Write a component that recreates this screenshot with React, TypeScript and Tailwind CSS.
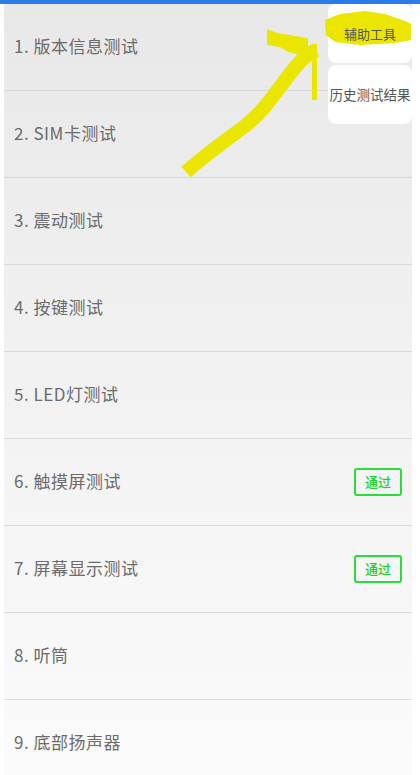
import React from 'react';

interface TestItem {
  label: string;
  passed?: boolean;
}

const items: TestItem[] = [
  { label: '1. 版本信息测试' },
  { label: '2. SIM卡测试' },
  { label: '3. 震动测试' },
  { label: '4. 按键测试' },
  { label: '5. LED灯测试' },
  { label: '6. 触摸屏测试', passed: true },
  { label: '7. 屏幕显示测试', passed: true },
  { label: '8. 听筒' },
  { label: '9. 底部扬声器' },
];

const font = { fontFamily: '"Noto Sans CJK SC", "Noto Sans", sans-serif' };

const App: React.FC = () => {
  return (
    <div className="relative w-[420px] h-[775px] overflow-hidden bg-white" style={font}>
      {/* top accent bar */}
      <div className="h-[4px] bg-[#2b7be9]" />

      {/* test list */}
      <div className="ml-[4px] w-[408px] h-[771px] bg-gradient-to-b from-[#e8e8e8] via-[#f2f2f2] to-[#fbfbfb]">
        {items.map((item, i) => (
          <div
            key={i}
            className="h-[87px] flex items-center justify-between pl-[10px] pr-[10px] border-b border-[#d9d9d9]"
          >
            <span className="text-[17px] text-[#6b6b6b] tracking-[0.5px] -mt-[2px]">{item.label}</span>
            {item.passed && (
              <span className="w-[48px] h-[28px] flex items-center justify-center border-[2.5px] border-[#2bdc3a] rounded-[3px] text-[13px] font-medium text-[#1fcf2e]">
                通过
              </span>
            )}
          </div>
        ))}
      </div>

      {/* popup menu */}
      <div className="absolute left-[328px] top-[4px] w-[84px] flex flex-col gap-[2px]">
        <div className="h-[59px] bg-white rounded-[8px]" />
        <div className="h-[59px] bg-white rounded-[8px] flex items-center justify-center text-[13.5px] text-[#555555] whitespace-nowrap">
          历史测试结果
        </div>
      </div>

      {/* yellow annotation */}
      <svg className="absolute left-0 top-0 pointer-events-none" width="420" height="775">
        <path
          d="M325 20 L340 14 L365 11 L385 14 L405 21 L411 24 L411 40 L395 43 L360 45 L335 42 L326 35 Z"
          fill="#ebe600"
        />
        <path
          d="M186 172 C205 155 225 141 245 126 C268 108 282 82 298 64 C304 57 310 53 316 50"
          stroke="#ebe600"
          strokeWidth="14"
          fill="none"
          strokeLinecap="butt"
        />
        <path d="M267 29 L277 33 L308 38 L308 46 L315 46 L315 53 L300 55 L288 52 L280 47 L267 45 Z" fill="#ebe600" />
        <rect x="312" y="44" width="5" height="56" fill="#ebe600" />
      </svg>

      {/* menu text over highlight */}
      <div className="absolute left-[328px] top-[4px] w-[84px] h-[59px] flex items-center justify-center text-[13px] text-[#555555] pointer-events-none">
        辅助工具
      </div>
    </div>
  );
};

export default App;
